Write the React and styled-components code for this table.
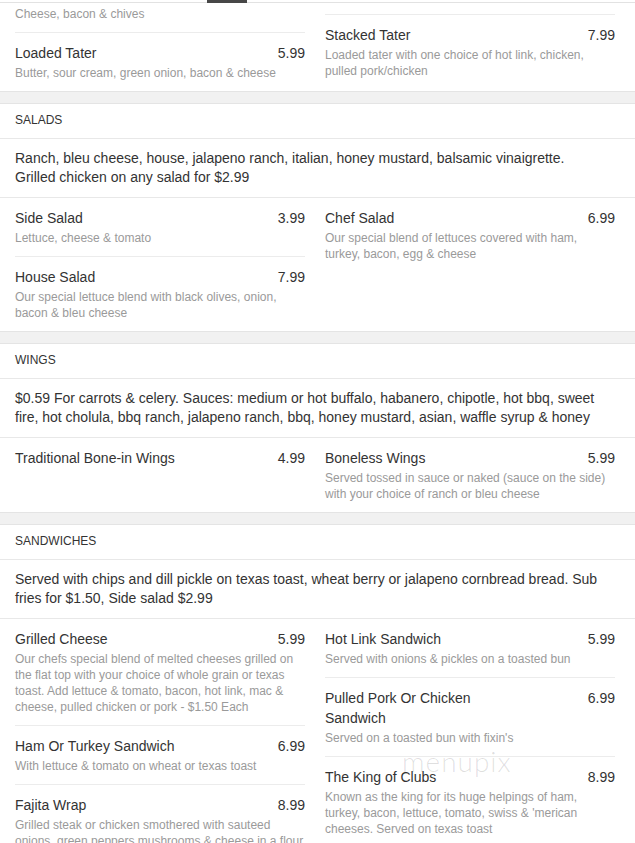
import React from 'react';
import styled, { createGlobalStyle } from 'styled-components';

const GlobalStyle = createGlobalStyle`
  html, body {
    margin: 0;
    padding: 0;
    background: #f1f1f1;
    font-family: "Liberation Sans", Arial, sans-serif;
    color: #333;
  }
`;

const Page = styled.div`
  position: relative;
  display: flex;
  flex-direction: column;
  width: 635px;
  overflow: hidden;
`;

const TopBar = styled.div`
  position: fixed;
  top: 0;
  left: 0;
  right: 0;
  height: 2px;
  background: #fff;
  border-bottom: 1px solid #e2e2e2;
  z-index: 5;
`;

const TabMark = styled.div`
  position: absolute;
  top: 0;
  left: 207px;
  width: 40px;
  height: 3px;
  background: #474747;
`;

const Card = styled.section`
  background: #fff;
  border-top: 1px solid #e4e4e4;
  border-bottom: 1px solid #e4e4e4;
  margin-bottom: 11px;
  margin-top: ${({ $offset }) => $offset || 0}px;
`;

const Header = styled.h2`
  margin: 0;
  padding: 9px 15px 11px;
  font-size: 12px;
  line-height: 14px;
  font-weight: normal;
  text-transform: uppercase;
  color: #333;
  border-bottom: 1px solid #e8e8e8;
`;

const Intro = styled.p`
  margin: 0;
  padding: 10px 30px 10px 15px;
  font-size: 14px;
  line-height: 19px;
  color: #333;
  border-bottom: 1px solid #e8e8e8;
`;

const Columns = styled.div`
  display: grid;
  grid-template-columns: 1fr 1fr;
  column-gap: 20px;
  padding: 0 20px 0 15px;
  align-items: start;
`;

const Column = styled.div`
  display: flex;
  flex-direction: column;
  min-width: 0;
`;

const Item = styled.div`
  padding: 10px 0;

  & + & {
    border-top: 1px solid #ececec;
  }
`;

const ItemRow = styled.div`
  display: flex;
  align-items: flex-start;
`;

const Name = styled.div`
  width: 66%;
  font-size: 14px;
  line-height: 20px;
  color: #333;
`;

const Price = styled.div`
  margin-left: auto;
  font-size: 14px;
  line-height: 20px;
  color: #333;
`;

const Desc = styled.div`
  margin-top: 2px;
  font-size: 12px;
  line-height: 16px;
  color: #9a9a9a;
`;

const Watermark = styled.div`
  position: absolute;
  left: 402px;
  top: 744px;
  font-family: Lato, "DejaVu Sans", sans-serif;
  font-weight: 300;
  font-size: 28px;
  letter-spacing: 1px;
  color: rgba(0, 0, 0, 0.13);
  pointer-events: none;
`;

// the first card is scrolled partly out of view
const sections = [
  {
    offset: -7,
    left: [
      { desc: 'Cheese, bacon & chives' },
      {
        name: 'Loaded Tater',
        price: '5.99',
        desc: 'Butter, sour cream, green onion, bacon & cheese',
      },
    ],
    right: [
      {},
      {
        name: 'Stacked Tater',
        price: '7.99',
        desc: 'Loaded tater with one choice of hot link, chicken, pulled pork/chicken',
      },
    ],
  },
  {
    title: 'Salads',
    intro:
      'Ranch, bleu cheese, house, jalapeno ranch, italian, honey mustard, balsamic vinaigrette. Grilled chicken on any salad for $2.99',
    left: [
      { name: 'Side Salad', price: '3.99', desc: 'Lettuce, cheese & tomato' },
      {
        name: 'House Salad',
        price: '7.99',
        desc: 'Our special lettuce blend with black olives, onion, bacon & bleu cheese',
      },
    ],
    right: [
      {
        name: 'Chef Salad',
        price: '6.99',
        desc: 'Our special blend of lettuces covered with ham, turkey, bacon, egg & cheese',
      },
    ],
  },
  {
    title: 'Wings',
    intro:
      '$0.59 For carrots & celery. Sauces: medium or hot buffalo, habanero, chipotle, hot bbq, sweet fire, hot cholula, bbq ranch, jalapeno ranch, bbq, honey mustard, asian, waffle syrup & honey',
    left: [{ name: 'Traditional Bone-in Wings', price: '4.99' }],
    right: [
      {
        name: 'Boneless Wings',
        price: '5.99',
        desc: 'Served tossed in sauce or naked (sauce on the side) with your choice of ranch or bleu cheese',
      },
    ],
  },
  {
    title: 'Sandwiches',
    intro:
      'Served with chips and dill pickle on texas toast, wheat berry or jalapeno cornbread bread. Sub fries for $1.50, Side salad $2.99',
    left: [
      {
        name: 'Grilled Cheese',
        price: '5.99',
        desc: 'Our chefs special blend of melted cheeses grilled on the flat top with your choice of whole grain or texas toast. Add lettuce & tomato, bacon, hot link, mac & cheese, pulled chicken or pork - $1.50 Each',
      },
      {
        name: 'Ham Or Turkey Sandwich',
        price: '6.99',
        desc: 'With lettuce & tomato on wheat or texas toast',
      },
      {
        name: 'Fajita Wrap',
        price: '8.99',
        desc: 'Grilled steak or chicken smothered with sauteed onions, green peppers mushrooms & cheese in a flour tortilla',
      },
    ],
    right: [
      {
        name: 'Hot Link Sandwich',
        price: '5.99',
        desc: 'Served with onions & pickles on a toasted bun',
      },
      {
        name: 'Pulled Pork Or Chicken Sandwich',
        price: '6.99',
        desc: "Served on a toasted bun with fixin's",
      },
      {
        name: 'The King of Clubs',
        price: '8.99',
        desc: "Known as the king for its huge helpings of ham, turkey, bacon, lettuce, tomato, swiss & 'merican cheeses. Served on texas toast",
      },
    ],
  },
];

function MenuItem({ name, price, desc }) {
  return (
    <Item>
      {name && (
        <ItemRow>
          <Name>{name}</Name>
          {price && <Price>{price}</Price>}
        </ItemRow>
      )}
      {desc && <Desc>{desc}</Desc>}
    </Item>
  );
}

export default function App() {
  return (
    <Page>
      <GlobalStyle />
      <TopBar>
        <TabMark />
      </TopBar>
      {sections.map((section, i) => (
        <Card key={i} $offset={section.offset}>
          {section.title && <Header>{section.title}</Header>}
          {section.intro && <Intro>{section.intro}</Intro>}
          <Columns>
            <Column>
              {section.left.map((item, j) => (
                <MenuItem key={j} {...item} />
              ))}
            </Column>
            <Column>
              {section.right.map((item, j) => (
                <MenuItem key={j} {...item} />
              ))}
            </Column>
          </Columns>
        </Card>
      ))}
      <Watermark>menupix</Watermark>
    </Page>
  );
}
